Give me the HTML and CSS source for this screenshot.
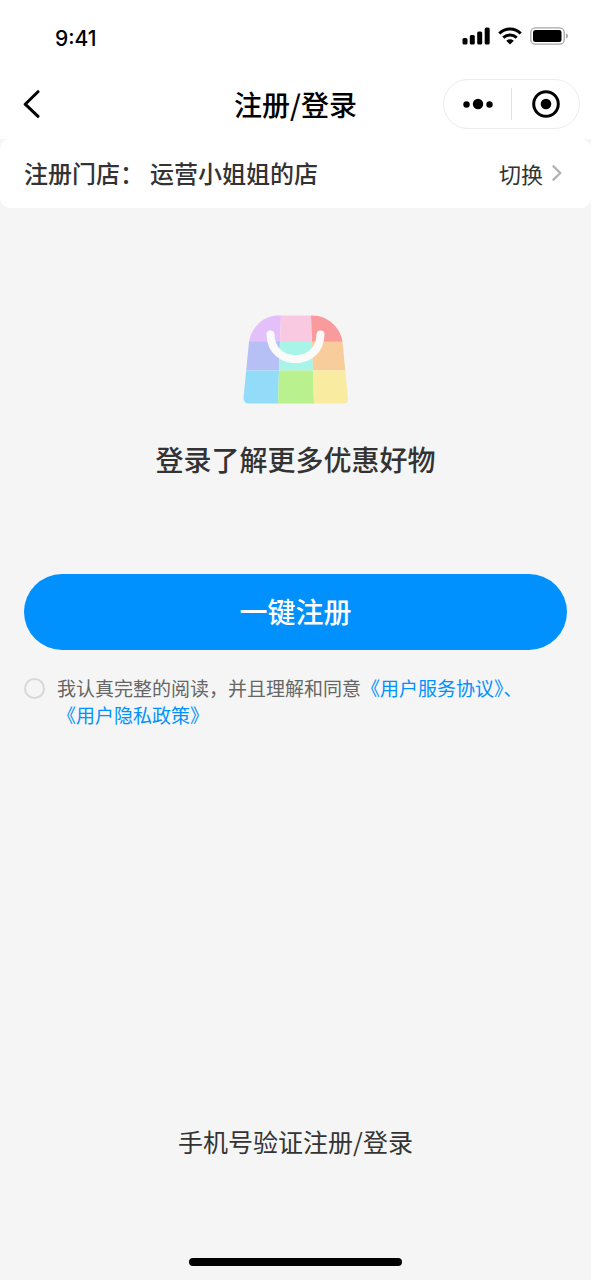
FILE: index.html
```html
<!DOCTYPE html>
<html lang="zh-CN">
<head>
<meta charset="utf-8">
<meta name="viewport" content="width=device-width, initial-scale=1">
<title>注册/登录</title>
<link rel="stylesheet" href="styles.css">
</head>
<body>
<div class="screen">
  <header class="header">
    <div class="status">
      <time class="clock">9:41</time>
      <div class="status-icons">
        <svg width="28" height="18" viewBox="0 0 28 18" aria-hidden="true">
          <rect x="0.500" y="11" width="5" height="6.500" rx="1.500"/>
          <rect x="7.800" y="8" width="5" height="9.500" rx="1.500"/>
          <rect x="15.200" y="4.500" width="5" height="13" rx="1.500"/>
          <rect x="22.700" y="0.500" width="5" height="17" rx="1.500"/>
        </svg>
        <svg width="24" height="18" viewBox="0 0 24 18" fill="none" stroke="#000" stroke-width="3" aria-hidden="true">
          <path d="M1.300 6.500C7.300.4 16.700.4 22.700 6.500"/>
          <path d="M5.300 10.600C9.200 7 14.800 7 18.700 10.600"/>
          <path d="M12 17.500L8.200 13.700Q12 10.900 15.800 13.700Z" fill="#000" stroke="none"/>
        </svg>
        <svg width="39" height="18" viewBox="0 0 39 18" aria-hidden="true">
          <rect x=".8" y=".8" width="33.400" height="16.400" rx="4.500" fill="none" stroke="#a6a6a6" stroke-width="1.300"/>
          <rect x="3" y="3" width="28.500" height="12" rx="2.500"/>
          <path d="M36 6.300Q38 7.200 38 9T36 11.700Z" fill="#a6a6a6"/>
        </svg>
      </div>
    </div>
    <nav class="navbar">
      <button class="icon-button back" type="button" aria-label="返回">
        <svg width="18" height="28" viewBox="0 0 18 28" fill="none" stroke="#000" stroke-width="3" stroke-linecap="round" stroke-linejoin="round"><path d="M15 1.700L2.200 14.200L15 26.300"/></svg>
      </button>
      <h1 class="title">注册/登录</h1>
      <div class="capsule">
        <button class="icon-button capsule-button" type="button" aria-label="更多">
          <svg width="30" height="12" viewBox="0 0 30 12"><circle cx="3.500" cy="6.500" r="3.200"/><circle cx="15" cy="6" r="5.200"/><circle cx="26.500" cy="6.500" r="3.200"/></svg>
        </button>
        <button class="icon-button capsule-button" type="button" aria-label="关闭">
          <svg width="28" height="28" viewBox="0 0 28 28"><circle cx="14" cy="14" r="12.300" fill="none" stroke="#000" stroke-width="3"/><circle cx="14" cy="14" r="5.300"/></svg>
        </button>
      </div>
    </nav>
  </header>
  <main class="main">
    <section class="store">
      <span class="store-label">注册门店：</span>
      <strong class="store-name">运营小姐姐的店</strong>
      <button class="switch" type="button">切换
        <svg width="10" height="16" viewBox="0 0 10 16" fill="none" stroke="#b3b3b3" stroke-width="2.400" stroke-linecap="round" stroke-linejoin="round"><path d="M1.500 1.300L8.300 8L1.500 14.700"/></svg>
      </button>
    </section>
    <section class="intro">
      <svg class="logo" width="106" height="90" viewBox="0 0 106 90" aria-hidden="true">
        <defs><clipPath id="bag"><path d="M35 .5H69C86 .5 98 14 99.500 27L105 84Q105 88.500 100 88.500H6Q.5 88.500 .5 83L6 27C8 13 20 .5 35 .5Z"/></clipPath></defs>
        <g clip-path="url(#bag)">
          <path d="M0 0H38L37 27H0Z" fill="#e4c0fa"/><path d="M38 0H68L69 27H37Z" fill="#f9c9e1"/><path d="M68 0H106V27H69Z" fill="#f99b9d"/>
          <path d="M0 26.500H37L36 55.500H0Z" fill="#b7c0f5"/><path d="M37 26.500H69L70 55.500H36Z" fill="#a8f4e8"/><path d="M69 26.500H106V55.500H70Z" fill="#f8cc9b"/>
          <path d="M0 55.500H36L35 90H0Z" fill="#92dcf9"/><path d="M36 55.500H70L71 90H35Z" fill="#b9f18f"/><path d="M70 55.500H106V90H71Z" fill="#f9eba0"/>
        </g>
        <path d="M27.500 19.500C28 52.500 77 52.500 77.500 19.500" fill="none" stroke="#fafafa" stroke-width="8" stroke-linecap="round"/>
      </svg>
      <h2 class="slogan">登录了解更多优惠好物</h2>
    </section>
    <form class="form">
      <button class="submit" type="button">一键注册</button>
      <div class="agreement">
        <input class="radio" id="agree" type="checkbox">
        <p class="terms"><label for="agree">我认真完整的阅读，并且理解和同意</label><a href="#">《用户服务协议》、</a><br><a href="#">《用户隐私政策》</a></p>
      </div>
    </form>
  </main>
  <footer class="footer">
    <a class="phone-login" href="#">手机号验证注册/登录</a>
    <div class="home-indicator"></div>
  </footer>
</div>
</body>
</html>
```
FILE: styles.css
```css
* {
  box-sizing: border-box;
}

body {
  margin: 0;
  background: #f5f5f5;
  color: #333;
  font-family: "Noto Sans CJK SC", sans-serif;
}

button {
  padding: 0;
  border: 0;
  background: none;
  color: inherit;
  font: inherit;
  cursor: pointer;
}

svg {
  display: block;
}

a {
  color: #0091ff;
  text-decoration: none;
}

.screen {
  display: flex;
  flex-direction: column;
  min-height: 100vh;
}

.header {
  background: #fff;
  color: #000;
}

.status {
  display: flex;
  justify-content: space-between;
  padding: 27px 22px 0 55px;
}

.clock {
  font: 500 21px/24px Inter, sans-serif;
}

.status-icons {
  display: flex;
  gap: 8px;
}

.navbar {
  display: grid;
  grid-template-columns: 1fr auto 1fr;
  align-items: center;
  padding: 28px 11px 10px;
}

.icon-button {
  display: flex;
  align-items: center;
  justify-content: center;
}

.back {
  justify-self: start;
  margin-left: 12px;
}

.title {
  margin: 0;
  font-size: 28px;
  font-weight: 500;
  line-height: 40px;
}

.capsule {
  display: flex;
  align-items: center;
  justify-self: end;
  width: 137px;
  height: 50px;
  border: 1px solid #ececec;
  border-radius: 25px;
}

.capsule-button {
  flex: 1;
  height: 32px;
}

.capsule-button + .capsule-button {
  border-left: 1px solid #e2e2e2;
}

.main {
  flex: 1;
}

.store {
  display: flex;
  align-items: center;
  height: 69px;
  padding: 0 29px 2px 24px;
  border-radius: 10px;
  background: #fff;
  font-size: 24px;
}

.store-label,
.store-name {
  font-weight: 500;
}

.store-name {
  margin-left: 6px;
}

.switch {
  display: flex;
  align-items: center;
  gap: 9px;
  margin-left: auto;
  font-size: 22px;
}

.intro {
  display: flex;
  flex-direction: column;
  align-items: center;
  gap: 33px;
  padding-top: 107px;
}

.slogan {
  margin: 0;
  font-size: 28px;
  font-weight: 500;
  line-height: 42px;
}

.form {
  padding: 94px 24px 0;
}

.submit {
  width: 100%;
  height: 76px;
  padding-bottom: 2px;
  border-radius: 38px;
  background: #0091ff;
  color: #fff;
  font-size: 28px;
  font-weight: 500;
}

.agreement {
  display: flex;
  align-items: flex-start;
  gap: 12px;
  margin-top: 24px;
}

.radio {
  flex: none;
  width: 21px;
  height: 21px;
  margin: 4px 0;
  border: 2px solid #d8d8d8;
  border-radius: 50%;
  appearance: none;
}

.radio:checked {
  border-color: #0091ff;
  background: #0091ff;
}

.terms {
  margin: 0;
  color: #666;
  font-size: 19px;
  line-height: 27px;
}

.footer {
  display: flex;
  flex-direction: column;
  align-items: center;
  gap: 99px;
  padding-bottom: 14px;
}

.phone-login {
  color: #333;
  font-size: 25px;
  line-height: 36px;
}

.home-indicator {
  width: 36%;
  height: 8px;
  border-radius: 4px;
  background: #000;
}
```
